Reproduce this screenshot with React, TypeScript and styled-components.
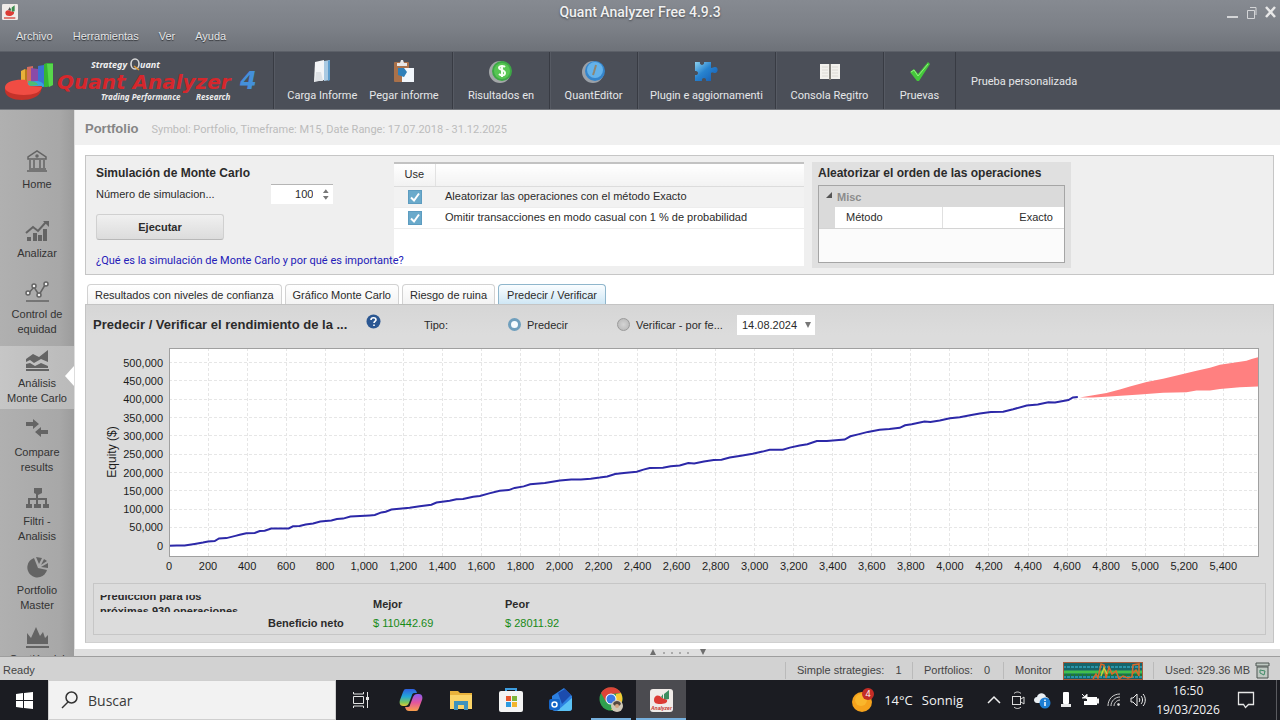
import React, { useLayoutEffect, useRef, useState } from "react";
import styled, { createGlobalStyle, css } from "styled-components";

const GlobalStyle = createGlobalStyle`
  * { box-sizing: border-box; }
  body {
    margin: 0;
    background: #fff;
    color: #2b2b2b;
    font: 11px/15px "Liberation Sans", Arial, sans-serif;
  }
  button, input, select { font: inherit; color: inherit; }
`;

const Window = styled.div`
  display: flex;
  flex-direction: column;
  height: 100vh;
  overflow: hidden;
`;

/* ---------- title and menu ---------- */

const TopBar = styled.header`
  flex: none;
  height: 51px;
  background: linear-gradient(#868a91, #7c8087 55%, #6e7279);
  color: #f0f0f0;
`;

const TitleRow = styled.div`
  display: grid;
  grid-template-columns: 1fr auto 1fr;
  align-items: center;
  height: 23px;
  padding: 0 2px 0 2px;
`;

const AppTitle = styled.h1`
  margin: 0;
  font: 500 14px/20px Roboto, sans-serif;
  color: #f0f0f0;
  text-shadow: 0 1px 2px #44474c;
`;

const WindowButtons = styled.div`
  display: flex;
  justify-content: flex-end;
  gap: 5px;
`;

const BareButton = styled.button`
  display: flex;
  align-items: center;
  justify-content: center;
  padding: 0;
  border: 0;
  background: none;
`;

const MenuRow = styled.nav`
  display: flex;
  gap: 20px;
  padding: 6px 16px;
`;

const MenuButton = styled(BareButton)`
  color: #e4e5e7;
  line-height: 15px;
  text-shadow: 0 1px 1px #2c2e32;
`;

/* ---------- tool bar ---------- */

const ToolBar = styled.div`
  flex: none;
  display: flex;
  height: 59px;
  background: #4b4f58;
  border-top: 1px solid #5c6068;
  border-bottom: 1px solid #74777d;
  color: #e6e7e9;
  font-family: Roboto, sans-serif;
`;

const Brand = styled.div`
  width: 273px;
  flex: none;
`;

const ToolGroup = styled.div<{ $width: number }>`
  flex: none;
  display: flex;
  justify-content: center;
  gap: 12px;
  width: ${(p) => p.$width}px;
  border-left: 1px solid #383b43;
  box-shadow: inset 1px 0 0 #565a63;
`;

const ToolButton = styled(BareButton)`
  flex-direction: column;
  justify-content: flex-start;
  gap: 4px;
  padding-top: 7px;
  white-space: nowrap;
  line-height: 15px;
`;

const CustomTest = styled(BareButton)`
  padding: 2px 15px 0;
  border-left: 1px solid #383b43;
`;

/* ---------- body ---------- */

const Body = styled.div`
  flex: 1;
  min-height: 0;
  display: flex;
`;

const Sidebar = styled.nav`
  flex: none;
  width: 74px;
  padding-top: 37px;
  overflow: hidden;
  background: linear-gradient(90deg, #b0b0b0, #a8a8a8 80%, #9c9c9c);
`;

const SideGroup = styled.div`
  margin-bottom: 14px;
`;

const SideItem = styled.button<{ $active?: boolean }>`
  position: relative;
  display: flex;
  flex-direction: column;
  align-items: center;
  gap: 3px;
  width: 100%;
  min-height: 55px;
  margin: 0 0 6px;
  padding: 2px 0 3px;
  border: 0;
  background: ${(p) => (p.$active ? "linear-gradient(90deg, #c6c6c6, #bababa)" : "none")};
  color: #333;
  line-height: 15px;
  text-align: center;
  white-space: pre-line;
  ${(p) =>
    p.$active &&
    css`
      &::after {
        content: "";
        position: absolute;
        right: 0;
        top: 20px;
        border: solid transparent;
        border-width: 10px 9px 10px 0;
        border-right-color: #fff;
      }
    `}
`;

const Main = styled.main`
  flex: 1;
  min-width: 0;
  display: flex;
  flex-direction: column;
  border-left: 1px solid #ddd;
`;

const PageHeader = styled.header`
  flex: none;
  display: flex;
  align-items: center;
  gap: 13px;
  height: 35px;
  padding: 3px 10px 0;
  background: #f0f0f0;
  color: #bcbcbc;
  font-family: Roboto, sans-serif;
`;

const PageTitle = styled.h2`
  margin: 0;
  font: bold 13px/18px "Liberation Sans", Arial, sans-serif;
  color: #858585;
`;

const Content = styled.div`
  flex: 1;
  min-height: 0;
  display: flex;
  flex-direction: column;
  padding: 10px 6px 6px 10px;
`;

const SetupPanel = styled.section`
  flex: none;
  display: flex;
  height: 120px;
  padding: 6px 10px;
  border: 1px solid #c6c6c6;
  background: #efefef;
`;

const SetupForm = styled.div`
  position: relative;
  flex: none;
  display: flex;
  flex-direction: column;
  align-items: flex-start;
  width: 298px;
  padding-top: 2px;
  white-space: nowrap;
`;

const SectionTitle = styled.h3`
  margin: 0;
  font-size: 12px;
  line-height: 18px;
`;

const CountRow = styled.div`
  display: flex;
  align-items: center;
  width: 237px;
  height: 24px;
  justify-content: space-between;
`;

const CountBox = styled.span`
  display: flex;
  align-items: center;
  width: 62px;
  height: 20px;
  padding-right: 3px;
  background: #fff;
  border-top: 1px solid #b5b5b5;
`;

const CountInput = styled.input`
  width: 100%;
  min-width: 0;
  padding: 0 9px 0 0;
  border: 0;
  background: none;
  text-align: right;
  appearance: textfield;
  &::-webkit-inner-spin-button { display: none; }
`;

const RunButton = styled.button`
  width: 128px;
  height: 26px;
  margin: 8px 0 13px;
  padding: 0;
  border: 1px solid #d0d0d0;
  border-bottom-color: #b8b8b8;
  border-radius: 3px;
  background: linear-gradient(#f0f0f0, #dcdcdc);
  font-weight: bold;
`;

const HelpLink = styled.a`
  color: #2420b8;
  font-family: Roboto, sans-serif;
  text-decoration: none;
  line-height: 15px;
`;

const OptionsBox = styled.div`
  flex: none;
  width: 410px;
  height: 104px;
  margin-right: 8px;
  border-top: 2px solid #c2c2c2;
  background: #fff;
`;

const OptionsTable = styled.table`
  width: 100%;
  border-collapse: collapse;
  th, td { padding: 0; height: 21px; text-align: left; font-weight: normal; }
  th { height: 22px; background: linear-gradient(#fff, #f2f2f2); border-bottom: 1px solid #dcdcdc; }
  th:first-child { width: 41px; text-align: center; border-right: 1px solid #e2e2e2; }
  td:first-child { text-align: center; }
  td:last-child { padding-left: 10px; }
  tbody tr:first-child { background: #f2f2f2; }
  tbody td { border-bottom: 1px solid #ededed; }
`;

const Tick = styled.input`
  appearance: none;
  display: block;
  width: 14px;
  height: 14px;
  margin: 0 auto;
  border: 1px solid #5d9cc0;
  background: #6aaacb
    url("data:image/svg+xml,%3Csvg xmlns='http://www.w3.org/2000/svg' viewBox='0 0 12 12'%3E%3Cpath d='M2 6.5l3 3L10 2.500' fill='none' stroke='white' stroke-width='2'/%3E%3C/svg%3E");
`;

const OrderBox = styled.div`
  flex: none;
  width: 259px;
  height: 106px;
  padding: 2px 6px 0;
  background: #e0e0e0;
`;

const OrderTitle = styled.h3`
  margin: 0;
  font-size: 12px;
  line-height: 18px;
  white-space: nowrap;
`;

const PropertyFrame = styled.div`
  height: 78px;
  margin-top: 3px;
  border: 1px solid #a5a5a5;
  background: #fbfbfb;
`;

const PropertyTable = styled.table`
  width: 100%;
  border-collapse: collapse;
  th { height: 21px; padding: 2px 6px 0; background: #dadada; color: #8c8c8c; text-align: left; }
  td { height: 21px; padding: 0 11px; border-bottom: 1px solid #d4d4d4; background: #fff; }
  td:first-child { width: 16px; padding: 0; background: #dadada; }
  td:nth-child(2) { width: 107px; border-right: 1px solid #e0e0e0; }
  td:last-child { text-align: right; }
`;

/* ---------- tabs and prediction ---------- */

const TabRow = styled.div`
  flex: none;
  display: flex;
  gap: 3px;
  margin-top: 9px;
  padding-left: 2px;
`;

const Tab = styled.button<{ $active?: boolean }>`
  height: 20px;
  padding: 2px ${(p) => (p.$active ? 8 : 7)}px 0;
  border: 1px solid ${(p) => (p.$active ? "#8fb6cc" : "#d2d2d2")};
  border-bottom: 0;
  border-radius: 4px 4px 0 0;
  background: ${(p) => (p.$active ? "linear-gradient(#fafdff, #cfe7f5)" : "linear-gradient(#fff, #f3f3f3)")};
  line-height: 15px;
  white-space: nowrap;
`;

const PredictPanel = styled.section`
  flex: 1;
  min-height: 0;
  display: flex;
  flex-direction: column;
  padding: 0 7px 7px;
  border: 1px solid #c4c4c4;
  border-bottom-color: #d0d0d0;
  background: linear-gradient(#d6d6d6, #dcdcdc 30px, #dcdcdc);
`;

const PredictHead = styled.div`
  flex: none;
  display: flex;
  align-items: center;
  height: 40px;
  white-space: nowrap;
`;

const PredictTitle = styled.h3`
  width: 272px;
  flex: none;
  margin: 0;
  font-size: 13px;
  line-height: 18px;
`;

const HelpButton = styled(BareButton)`
  width: 16px;
  height: 16px;
  margin: 0 43px 8px 0;
`;

const TypeLabel = styled.span`
  width: 84px;
`;

const RadioLabel = styled.label<{ $width: number }>`
  display: flex;
  align-items: center;
  gap: 6px;
  width: ${(p) => p.$width}px;
`;

const Radio = styled.input`
  appearance: none;
  width: 13px;
  height: 13px;
  margin: 0 0 2px;
  border: 1px solid #9a9a9a;
  border-radius: 50%;
  background: radial-gradient(#d4d4d4, #b4b4b4);
  &:checked {
    border: 3px solid #6f9fbd;
    background: #f6fcff;
  }
`;

const DateWrap = styled.span`
  display: flex;
  align-items: center;
  width: 78px;
  height: 20px;
  padding: 0 3px 0 5px;
  background: #fff;
`;

const DateSelect = styled.select`
  appearance: none;
  flex: 1;
  min-width: 0;
  padding: 0;
  border: 0;
  background: none;
`;

const ChartArea = styled.div`
  flex: 1;
  min-height: 120px;
  overflow: hidden;
`;

const ResultBox = styled.div`
  flex: none;
  display: flex;
  height: 52px;
  padding: 11px 6px 0;
  border: 1px solid #c6c6c6;
`;

const ResultNote = styled.div`
  display: flex;
  align-items: center;
  flex: none;
  width: 168px;
  height: 17px;
  overflow: hidden;
  font-weight: bold;
  white-space: pre;
`;

const ResultTable = styled.table`
  border-collapse: collapse;
  align-self: flex-start;
  th, td { width: 132px; height: 19px; padding: 0; text-align: left; }
  td { color: #178a17; }
  tr > :first-child { width: 105px; }
`;

const Splitter = styled.div`
  flex: none;
  display: flex;
  align-items: center;
  justify-content: center;
  height: 7px;
  background: #dedede;
`;

const StatusBar = styled.footer`
  flex: none;
  display: flex;
  align-items: center;
  height: 24px;
  padding: 4px 10px 0 3px;
  border-top: 1px solid #9e9e9e;
  background: #d2d2d2;
  color: #444;
`;

const Ready = styled.span`
  flex: 1;
`;

const StatusItem = styled.span<{ $width: number }>`
  display: flex;
  align-items: center;
  gap: 11px;
  width: ${(p) => p.$width}px;
  height: 17px;
  padding-left: 11px;
  border-left: 1px solid #bababa;
  white-space: nowrap;
`;

/* ---------- desktop task bar ---------- */

const TaskBar = styled.div`
  flex: none;
  display: flex;
  align-items: stretch;
  height: 40px;
  background: #1b1c22;
  color: #f2f2f2;
  font-family: "Open Sans", "Noto Sans", sans-serif;
`;

const StartButton = styled(BareButton)`
  width: 48px;
`;

const SearchBox = styled.label`
  display: flex;
  align-items: center;
  gap: 10px;
  width: 288px;
  padding: 0 12px;
  border: 1px solid #cfcfcf;
  background: #f2f2f2;
`;

const SearchInput = styled.input`
  flex: 1;
  min-width: 0;
  padding: 0;
  border: 0;
  background: none;
  color: #333;
  font-size: 14px;
  &::placeholder { color: #3a3a3a; opacity: 1; }
`;

const TaskButton = styled(BareButton)<{ $state?: "open" | "active" }>`
  width: 50px;
  ${(p) =>
    p.$state === "open" &&
    css`background: linear-gradient(#76b0de, #76b0de) center bottom / 40px 2px no-repeat;`}
  ${(p) =>
    p.$state === "active" &&
    css`background: #4b4b50; box-shadow: inset 0 -2px 0 #76b0de;`}
`;

const Tray = styled.div`
  display: flex;
  align-items: center;
  margin-left: auto;
`;

const Weather = styled(BareButton)`
  gap: 9px;
  margin-right: 19px;
  font-size: 13px;
  color: #f2f2f2;
`;

const TrayButton = styled(BareButton)`
  width: 24px;
  height: 40px;
`;

const Clock = styled.div`
  width: 76px;
  font-size: 12px;
  line-height: 19px;
  text-align: center;
`;

const NoticeButton = styled(BareButton)`
  width: 40px;
  height: 40px;
  margin-right: 10px;
`;

const DesktopEdge = styled.span`
  width: 4px;
  height: 40px;
  border-left: 1px solid #5a5b60;
`;

/* ---------- drawings ---------- */

const AppBadge = () => (
  <svg width="16" height="16" viewBox="0 0 24 24">
    <rect width="24" height="24" rx="2" fill="#f0ebe8" />
    <path d="M11 9l3-4v6zM15 5l4-3v9l-4 1z" fill="#3c8d50" />
    <path d="M9 9l3-5v6z" fill="#555" />
    <path d="M5 13c0-4 5-5 8-2l5 1c1 3-3 6-7 6s-6-2-6-5z" fill="#dc3b34" />
    <path d="M3 21h17" stroke="#d8483f" strokeWidth="2" />
  </svg>
);

const TaskAppIcon = () => (
  <svg width="25" height="25" viewBox="0 0 25 25">
    <rect x="1" y="1" width="23" height="23" rx="3" fill="#f0ebe8" />
    <path d="M12 9l2-3v5zM15 6l5-4v9l-5 1z" fill="#3c8d60" />
    <path d="M5 12c0-5 5-6 8-2l5 2c1 3-3 4-7 4s-6-1-6-4z" fill="#dc3b34" />
    <text x="2" y="22" fontFamily="Liberation Sans" fontSize="5" fontWeight="bold" fontStyle="italic" fill="#c3332c">Analyzer</text>
  </svg>
);

const BrandLogo = () => (
  <svg width="272" height="57" viewBox="0 52 272 57" role="img" aria-label="Quant Analyzer 4">
    <path d="M21 71l4-2v19h-4z" fill="#e8b23a" />
    <path d="M25 69l3 1v18h-3z" fill="#b97c1c" />
    <path d="M27 67l6-1v22h-6z" fill="#d46c5e" />
    <path d="M31 68l7 1v19h-7z" fill="#8a4aa8" />
    <path d="M38 66l6-1v22h-6z" fill="#3a72d2" />
    <path d="M44 64l3-1h6v22l-6 2h-3z" fill="#35b535" />
    <path d="M47 64h6v21l-4 2z" fill="#57d84b" />
    <path d="M27 84c7-5 16-3 17 2l-6 3z" fill="#39a3df" />
    <path d="M5 87v4c1 12 32 12 36 0l1-5z" fill="#c4322a" />
    <path d="M5 87c1-6 11-8 21-7l3 6 13 1c-1 5-8 8-18 8-12 0-20-4-19-8z" fill="#f04c43" />
    <path d="M28 81c5 0 9 1 10 4l-8 1z" fill="#4dbd74" />
    <g fontFamily="Noto Sans, sans-serif" fontStyle="italic" fontWeight="bold">
      <text x="91" y="68" fontSize="9" fill="#f0f0f0">Strategy</text>
      <text x="140" y="68" fontSize="9" fill="#f0f0f0">uant</text>
      <g fontFamily="DejaVu Sans, sans-serif">
        <text x="57" y="89" fontSize="20" fill="#d6272c">Quant Analyzer</text>
        <text x="240" y="89" fontSize="24" fill="#4490da">4</text>
      </g>
      <g fontSize="8" fill="#ececec">
        <text x="101" y="100">Trading Performance</text>
        <text x="196" y="100">Research</text>
      </g>
    </g>
    <ellipse cx="135" cy="64" rx="4" ry="5" fill="none" stroke="#d8d8d8" strokeWidth="1.6" />
    <path d="M134 66l5 4" stroke="#e09a35" strokeWidth="1.6" />
  </svg>
);

const ReportIcon = () => (
  <svg width="24" height="25" viewBox="0 0 24 25">
    <path d="M5 3l9-2v20l-10 2z" fill="#f3f5f7" />
    <path d="M14 2l6-1v20l-6 1z" fill="#a9c9e2" />
    <path d="M18 2l2-1v20l-2 1z" fill="#5e9dcc" />
    <path d="M6 13h5l2 9H5z" fill="#dde1e5" />
  </svg>
);

const PasteIcon = () => (
  <svg width="24" height="25" viewBox="0 0 24 25">
    <rect x="2" y="3" width="15" height="20" rx="1" fill="#a9714a" />
    <path d="M5 4h3l1-3h2l1 3h3v3H5z" fill="#e6e6e6" />
    <path d="M10 9h12v14H10z" fill="#f1f6fb" />
    <path d="M6 9h6l3 4-3 5-6-2z" fill="#2e7fb8" />
  </svg>
);

const MoneyIcon = () => (
  <svg width="24" height="25" viewBox="0 0 24 25">
    <circle cx="11" cy="13" r="11" fill="#a3a7a8" />
    <circle cx="13" cy="12" r="10" fill="#3da946" />
    <circle cx="13" cy="12" r="8" fill="#57c653" />
    <path d="M16 8c-2-2-6-1-6 1s6 2 6 5-4 3-6 1M13 6v12" fill="none" stroke="#f4fff2" strokeWidth="2" />
  </svg>
);

const EditorIcon = () => (
  <svg width="24" height="25" viewBox="0 0 24 25">
    <circle cx="11" cy="13" r="11" fill="#9ba1a8" />
    <circle cx="13" cy="12" r="10" fill="#3585cb" />
    <circle cx="13" cy="11" r="8" fill="#64b2ea" />
    <path d="M14 6l-2 7-1 3" stroke="#8f8670" strokeWidth="2" fill="none" />
  </svg>
);

const PuzzleIcon = () => (
  <svg width="24" height="25" viewBox="0 0 24 25">
    <defs>
      <linearGradient id="puzzle" x2="1" y2="1">
        <stop offset="0" stopColor="#8bd0ee" />
        <stop offset=".45" stopColor="#2783cf" />
        <stop offset="1" stopColor="#1459b0" />
      </linearGradient>
    </defs>
    <path d="M1 3h5c-1 4 5 4 4 0h7v6c2 0 2-1 4-1 4 0 3 6 0 6-2 0-2-1-4 0v8h-5c1-4-5-4-4 0H1v-6c4 1 4-5 0-4z" fill="url(#puzzle)" />
  </svg>
);

const BookIcon = () => (
  <svg width="24" height="25" viewBox="0 0 24 25">
    <path d="M2 5h20v15H2z" fill="#f2f1ed" />
    <path d="M12 5v16" stroke="#85837e" strokeWidth="2" />
    <path d="M4 8h6M4 11h6M4 14h6M4 17h6M14 8h6M14 11h6M14 14h6M14 17h6" stroke="#dcdad5" />
  </svg>
);

const CheckIcon = () => (
  <svg width="24" height="25" viewBox="0 0 24 25">
    <path d="M2 13l4-3 4 5L20 3l2 2-11 17H9z" fill="#45c83c" />
    <path d="M3 13l3-2 4 6L20 5" fill="none" stroke="#93f07e" />
  </svg>
);

const sideDrawings: Record<string, React.ReactNode> = {
  home: (
    <g fill="none" stroke="#646464" strokeWidth="1.5">
      <path d="M3 9V8l9-6 9 6v2H3zM4 20h17M2 22h20M5 11v8M9 11v8M15 11v8M19 11v8" />
      <circle cx="12" cy="7" r="1" />
    </g>
  ),
  analyze: (
    <g fill="#646464">
      <path d="M2 19h4v4H2zM8 15h4v8H8zM13 17h4v6h-4zM18 11h4v12h-4z" />
      <path d="M1 15l7-6 5 4 8-9" fill="none" stroke="#646464" strokeWidth="2" />
      <path d="M18 3h6v6z" />
    </g>
  ),
  control: (
    <g fill="#f2f2f2" stroke="#646464" strokeWidth="1.5">
      <path d="M3 15l6-7 5 8 6-10M1 22h23" fill="none" />
      <circle cx="3" cy="14" r="2" />
      <circle cx="9" cy="7" r="2" />
      <circle cx="14" cy="16" r="2" />
      <circle cx="21" cy="5" r="2" />
    </g>
  ),
  monte: (
    <g fill="#646464">
      <path d="M1 11l7-5 6 3 9-7v12l-7-3-7 4-4-3-4 2z" />
      <path d="M1 16l4-1 5 3 6-3 7 3v2H1zM1 21h23v2H1z" />
    </g>
  ),
  compare: <path d="M1 5h7V2l6 5-6 5V9H1zM23 13h-7v-3l-6 5 6 5v-3h7z" fill="#646464" />,
  filter: (
    <g fill="#646464">
      <path d="M9 2h8v5l-4 2-4-2zM1 18h6v4H1zM9 18h7v4H9zM18 18h6v4h-6z" />
      <path d="M4 18v-5h17v5M12 8v10" fill="none" stroke="#646464" strokeWidth="2" />
    </g>
  ),
  pie: (
    <g fill="#646464">
      <path d="M9 3a10 10 0 1 0 13 12l-9-2z" />
      <path d="M11 2l3 7 3-6zM19 4l-3 6 6-4zM16 12l7-4v5z" />
    </g>
  ),
  crown: <path d="M2 20V9l4 5 5-11 4 9 3-4 2 6 3-3v9zM1 22h23v2H1z" fill="#646464" />,
};

const SideIcon = ({ name }: { name: string }) => (
  <svg width="25" height="25" viewBox="0 0 25 25">{sideDrawings[name]}</svg>
);

/* ---------- equity chart ---------- */

// Pairs of [operation number, equity in thousands].
const equity: [number, number][] = [
  [0, 0], [40, 1], [80, 1], [131, 5], [174, 9], [200, 12], [234, 13], [256, 20], [294, 21], [340, 27], [362, 30],
  [396, 34], [439, 35], [465, 40], [490, 41], [524, 47], [613, 47], [635, 53], [669, 54], [700, 58], [738, 61],
  [775, 66], [832, 69], [860, 73], [892, 74], [929, 80], [1028, 83], [1054, 84], [1088, 91], [1110, 93],
  [1139, 99], [1233, 104], [1284, 108], [1344, 112], [1370, 118], [1438, 123], [1472, 127], [1506, 128],
  [1558, 134], [1592, 136], [1640, 143], [1694, 150], [1740, 152], [1770, 158], [1817, 162], [1850, 168],
  [1925, 171], [2002, 178], [2060, 181], [2110, 181], [2160, 183], [2206, 186], [2245, 189], [2285, 196],
  [2330, 199], [2396, 202], [2430, 208], [2462, 212], [2530, 213], [2570, 217], [2616, 219], [2660, 226],
  [2690, 225], [2740, 230], [2790, 234], [2830, 235], [2872, 241], [2930, 246], [2990, 251], [3040, 257],
  [3077, 262], [3144, 262], [3180, 268], [3230, 274], [3270, 277], [3318, 286], [3370, 286], [3461, 290],
  [3490, 299], [3530, 304], [3580, 311], [3640, 317], [3690, 319], [3743, 322], [3770, 329], [3804, 332],
  [3870, 339], [3900, 338], [3948, 342], [4000, 348], [4050, 351], [4110, 357], [4153, 361], [4210, 365],
  [4273, 366], [4324, 373], [4393, 383], [4450, 386], [4504, 392], [4538, 391], [4607, 398], [4630, 405], [4655, 406],
];
const best: [number, number][] = [
  [4665, 405], [4734, 411], [4802, 417], [4870, 427], [4922, 435], [5007, 447], [5092, 456], [5178, 467],
  [5263, 478], [5332, 486], [5383, 494], [5460, 500], [5519, 505], [5545, 510], [5578, 515],
];
const worst: [number, number][] = [
  [5578, 435], [5485, 433], [5383, 428], [5332, 424], [5263, 424], [5212, 419], [5092, 418], [4973, 413],
  [4836, 408], [4734, 405],
];

const X_MAX = 5578;
const Y_MIN = -28;
const Y_MAX = 540;

const EquityChart = () => {
  const ref = useRef<HTMLDivElement>(null);
  const [size, setSize] = useState({ w: 1173, h: 238 });
  useLayoutEffect(() => {
    const el = ref.current;
    if (!el) return;
    const measure = () => setSize({ w: el.clientWidth, h: el.clientHeight });
    measure();
    const observer = new ResizeObserver(measure);
    observer.observe(el);
    return () => observer.disconnect();
  }, []);

  const left = 76;
  const top = 3;
  const width = size.w - left - 8;
  const height = size.h - top - 27;
  const x = (v: number) => left + (v / X_MAX) * width;
  const y = (v: number) => top + ((Y_MAX - v) / (Y_MAX - Y_MIN)) * height;
  const line = (pts: [number, number][]) => pts.map(([a, b]) => `${x(a).toFixed(1)},${y(b).toFixed(1)}`).join(" ");
  const xTicks = Array.from({ length: 28 }, (_, i) => i * 200);
  const yTicks = Array.from({ length: 11 }, (_, i) => i * 50);

  return (
    <ChartArea ref={ref}>
      <svg width={size.w} height={size.h} display="block" fontFamily="Liberation Sans, Arial" fontSize="11" fill="#1c1c1c">
        <rect x={left} y={top} width={width} height={height} fill="#fff" />
        <g stroke="#e6e6e6" strokeDasharray="3 2" shapeRendering="crispEdges">
          {xTicks.slice(1).map((t) => <line key={t} x1={x(t)} x2={x(t)} y1={top} y2={top + height} />)}
          {yTicks.map((t) => <line key={t} x1={left} x2={left + width} y1={y(t)} y2={y(t)} />)}
        </g>
        <polygon points={line([...best, ...worst])} fill="#ff8080" />
        <polyline points={line(equity)} fill="none" stroke="#2c28a8" strokeWidth="2" />
        <rect x={left} y={top} width={width} height={height} fill="none" stroke="#a0a0a0" shapeRendering="crispEdges" />
        {xTicks.map((t) => (
          <text key={t} x={x(t)} y={top + height + 14} textAnchor="middle">{t.toLocaleString("en-US")}</text>
        ))}
        {yTicks.map((t) => (
          <text key={t} x={left - 6} y={y(t) + 4} textAnchor="end">{(t * 1000).toLocaleString("en-US")}</text>
        ))}
        <text transform={`translate(23 ${top + height / 2}) rotate(-90)`} textAnchor="middle" fontSize="12">Equity ($)</text>
      </svg>
    </ChartArea>
  );
};

/* ---------- page ---------- */

const toolGroups = [
  { width: 179, items: [["Carga Informe", <ReportIcon />], ["Pegar informe", <PasteIcon />]] },
  { width: 97, items: [["Risultados en", <MoneyIcon />]] },
  { width: 88, items: [["QuantEditor", <EditorIcon />]] },
  { width: 138, items: [["Plugin e aggiornamenti", <PuzzleIcon />]] },
  { width: 108, items: [["Consola Regitro", <BookIcon />]] },
  { width: 72, items: [["Pruevas", <CheckIcon />]] },
] as { width: number; items: [string, React.ReactNode][] }[];

const sideItems = [
  ["analyze", "Analizar"],
  ["control", "Control de\nequidad"],
  ["monte", "Análisis\nMonte Carlo"],
  ["compare", "Compare\nresults"],
  ["filter", "Filtri -\nAnalisis"],
  ["pie", "Portfolio\nMaster"],
  ["crown", "Gestión del"],
];

const tabs = ["Resultados con niveles de confianza", "Gráfico Monte Carlo", "Riesgo de ruina", "Predecir / Verificar"];

const MonitorGraph = () => (
  <svg width="80" height="18" viewBox="0 0 80 18">
    <rect width="80" height="18" fill="#17646a" />
    <path d="M0 5h80M0 15h80" stroke="#2a94a8" strokeWidth="2" strokeDasharray="3 1" />
    <path d="M0 10h80" stroke="#42c04c" strokeWidth="3" />
    <path d="M0 13h80" stroke="#1d7a34" strokeWidth="2" strokeDasharray="3 1" />
    <path d="M30 17l3-5 2 4 3-14 3 1 2 13 3-11 3 7 4-3 3 8 4-3 5 2 4-1 1-12 6-1v12l-3-6-4 4" fill="none" stroke="#d9692c" strokeWidth="1.5" />
    <path d="M38 14l3-8 3 6" fill="none" stroke="#c9d13b" strokeWidth="1.5" />
    <rect x=".5" y=".5" width="79" height="17" fill="none" stroke="#a85c3c" />
  </svg>
);

export default function App() {
  return (
    <Window>
      <GlobalStyle />
      <TopBar>
        <TitleRow>
          <AppBadge />
          <AppTitle>Quant Analyzer Free 4.9.3</AppTitle>
          <WindowButtons>
            <BareButton aria-label="Minimizar">
              <svg width="14" height="16" viewBox="0 0 14 16"><path d="M1 13h11" stroke="#d4d5d7" strokeWidth="2" /></svg>
            </BareButton>
            <BareButton aria-label="Restaurar">
              <svg width="12" height="16" viewBox="0 0 12 16" fill="none" stroke="#d4d5d7"><path d="M2.500 6.500h7v8h-7zM5 3.500h6V11" /></svg>
            </BareButton>
            <BareButton aria-label="Cerrar">
              <svg width="16" height="16" viewBox="0 0 16 16"><path d="M4 3l9 10M13 3L4 13" stroke="#e8e8e8" strokeWidth="2.500" /></svg>
            </BareButton>
          </WindowButtons>
        </TitleRow>
        <MenuRow>
          {["Archivo", "Herramientas", "Ver", "Ayuda"].map((m) => <MenuButton key={m}>{m}</MenuButton>)}
        </MenuRow>
      </TopBar>

      <ToolBar>
        <Brand><BrandLogo /></Brand>
        {toolGroups.map((g) => (
          <ToolGroup key={g.width} $width={g.width}>
            {g.items.map(([label, icon]) => (
              <ToolButton key={label}>{icon}{label}</ToolButton>
            ))}
          </ToolGroup>
        ))}
        <CustomTest>Prueba personalizada</CustomTest>
      </ToolBar>

      <Body>
        <Sidebar>
          <SideGroup>
            <SideItem><SideIcon name="home" />Home</SideItem>
          </SideGroup>
          {sideItems.map(([icon, label]) => (
            <SideItem key={icon} $active={icon === "monte"}><SideIcon name={icon} />{label}</SideItem>
          ))}
        </Sidebar>

        <Main>
          <PageHeader>
            <PageTitle>Portfolio</PageTitle>
            Symbol: Portfolio, Timeframe: M15, Date Range: 17.07.2018 - 31.12.2025
          </PageHeader>

          <Content>
            <SetupPanel>
              <SetupForm>
                <SectionTitle>Simulación de Monte Carlo</SectionTitle>
                <CountRow>
                  <label htmlFor="runs">Número de simulacion...</label>
                  <CountBox>
                    <CountInput id="runs" type="number" defaultValue={100} />
                    <svg width="9" height="12" viewBox="0 0 8 12"><path d="M4 0l3 4H1zM1 7h6l-3 4z" fill="#777" /></svg>
                  </CountBox>
                </CountRow>
                <RunButton>Ejecutar</RunButton>
                <HelpLink href="#monte-carlo">¿Qué es la simulación de Monte Carlo y por qué es importante?</HelpLink>
              </SetupForm>

              <OptionsBox>
                <OptionsTable>
                  <thead><tr><th>Use</th><th /></tr></thead>
                  <tbody>
                    <tr>
                      <td><Tick id="exact" type="checkbox" defaultChecked /></td>
                      <td><label htmlFor="exact">Aleatorizar las operaciones con el método Exacto</label></td>
                    </tr>
                    <tr>
                      <td><Tick id="skip" type="checkbox" defaultChecked /></td>
                      <td><label htmlFor="skip">Omitir transacciones en modo casual con 1 % de probabilidad</label></td>
                    </tr>
                  </tbody>
                </OptionsTable>
              </OptionsBox>

              <OrderBox>
                <OrderTitle>Aleatorizar el orden de las operaciones</OrderTitle>
                <PropertyFrame>
                  <PropertyTable>
                    <tbody>
                      <tr>
                        <th colSpan={3}>
                          <svg width="12" height="10" viewBox="0 0 12 10"><path d="M7 1v6H1z" fill="#555" /></svg>Misc
                        </th>
                      </tr>
                      <tr><td /><td>Método</td><td>Exacto</td></tr>
                    </tbody>
                  </PropertyTable>
                </PropertyFrame>
              </OrderBox>
            </SetupPanel>

            <TabRow role="tablist">
              {tabs.map((t, i) => <Tab key={t} role="tab" aria-selected={i === 3} $active={i === 3}>{t}</Tab>)}
            </TabRow>

            <PredictPanel>
              <PredictHead>
                <PredictTitle>Predecir / Verificar el rendimiento de la ...</PredictTitle>
                <HelpButton aria-label="Ayuda">
                  <svg width="15" height="15" viewBox="0 0 15 15">
                    <circle cx="7.500" cy="7.500" r="7" fill="#2b5792" />
                    <path d="M5 6c0-3 5-3 5 0 0 1-2 1.500-2 3M8 10.500v1.500" fill="none" stroke="#fff" strokeWidth="1.600" />
                  </svg>
                </HelpButton>
                <TypeLabel>Tipo:</TypeLabel>
                <RadioLabel $width={109}><Radio type="radio" name="kind" defaultChecked />Predecir</RadioLabel>
                <RadioLabel $width={120}><Radio type="radio" name="kind" />Verificar - por fe...</RadioLabel>
                <DateWrap>
                  <DateSelect aria-label="Fecha"><option>14.08.2024</option></DateSelect>
                  <svg width="8" height="8" viewBox="0 0 8 8"><path d="M1 1h6L4 7z" fill="#777" /></svg>
                </DateWrap>
              </PredictHead>

              <EquityChart />

              <ResultBox>
                <ResultNote>{"Predicción para los\npróximas 930 operaciones"}</ResultNote>
                <ResultTable>
                  <tbody>
                    <tr><th /><th>Mejor</th><th>Peor</th></tr>
                    <tr><th>Beneficio neto</th><td>$ 110442.69</td><td>$ 28011.92</td></tr>
                  </tbody>
                </ResultTable>
              </ResultBox>
            </PredictPanel>
          </Content>

          <Splitter>
            <svg width="56" height="7" viewBox="0 0 56 7">
              <path d="M3 0l3 6H0zM50 0h6l-3 6z" fill="#6e6e6e" />
              <path d="M13 4h26" stroke="#aaa" strokeWidth="2" strokeDasharray="2 6" />
            </svg>
          </Splitter>
        </Main>
      </Body>

      <StatusBar>
        <Ready>Ready</Ready>
        <StatusItem $width={127}>Simple strategies:<span>1</span></StatusItem>
        <StatusItem $width={91}>Portfolios:<span>0</span></StatusItem>
        <StatusItem $width={150}>Monitor<MonitorGraph /></StatusItem>
        <StatusItem $width={102}>Used: 329.36 MB</StatusItem>
        <BareButton aria-label="Liberar memoria">
          <svg width="15" height="17" viewBox="0 0 15 17">
            <path d="M1 1h13v3H1zM2 5h11v11H2z" fill="#bfc8c2" stroke="#4c5450" />
            <path d="M5 8l5 1-1 4-4-2z" fill="none" stroke="#3f8a66" />
          </svg>
        </BareButton>
      </StatusBar>

      <TaskBar>
        <StartButton aria-label="Inicio">
          <svg width="17" height="17" viewBox="0 0 17 17"><path d="M0 2l7-1v7H0zM8 1l9-1v8H8zM0 9h7v7l-7-1zM8 9h9v8l-9-1z" fill="#fff" /></svg>
        </StartButton>
        <SearchBox>
          <svg width="17" height="18" viewBox="0 0 17 18" fill="none" stroke="#333" strokeWidth="1.500"><circle cx="10.500" cy="6.500" r="5.500" /><path d="M7 11l-6 6" /></svg>
          <SearchInput placeholder="Buscar" aria-label="Buscar" />
        </SearchBox>
        <TaskButton aria-label="Vista de tareas">
          <svg width="18" height="18" viewBox="0 0 18 18" fill="none" stroke="#e4e4e4"><path d="M1.500 1v2h10V1M1.500 17v-2h10v2M1.500 5.500h10v7h-10zM15.500 1v16" /><path d="M15.500 6v3" strokeWidth="3" /></svg>
        </TaskButton>
        <TaskButton aria-label="Copilot">
          <svg width="24" height="24" viewBox="0 0 24 24">
            <defs>
              <linearGradient id="copilotA" x2="0" y2="1">
                <stop offset="0" stopColor="#2f5fe0" />
                <stop offset=".45" stopColor="#22a7d8" />
                <stop offset=".8" stopColor="#7fc65a" />
                <stop offset="1" stopColor="#e8c63a" />
              </linearGradient>
              <linearGradient id="copilotB" x2="0" y2="1">
                <stop offset="0" stopColor="#8a5cf0" />
                <stop offset=".5" stopColor="#e3559f" />
                <stop offset="1" stopColor="#f9a04a" />
              </linearGradient>
            </defs>
            <path d="M7 1h7c2 0 3 1 4 4h-3c-1 0-2 1-2 2l-3 8c-1 2-2 3-4 3H4c-3 0-4-3-3-6l3-8c1-2 1-3 3-3z" fill="url(#copilotA)" />
            <path d="M17 23h-7c-2 0-3-1-4-4h3c1 0 2-1 2-2l3-8c1-2 2-3 4-3h2c3 0 4 3 3 6l-3 8c-1 2-1 3-3 3z" fill="url(#copilotB)" />
          </svg>
        </TaskButton>
        <TaskButton aria-label="Explorador">
          <svg width="24" height="24" viewBox="0 0 24 24"><path d="M1 3h8l2 2h12v14H1z" fill="#e9b23c" /><path d="M1 7h22v14H1z" fill="#fbd468" /><path d="M5 22v-9h14v9h-4v-5H9v5z" fill="#3e93bd" /></svg>
        </TaskButton>
        <TaskButton aria-label="Store">
          <svg width="26" height="26" viewBox="0 0 26 26"><path d="M8 6V2h10v4" fill="none" stroke="#3d9de0" strokeWidth="2" /><rect x="1" y="4" width="24" height="21" rx="2" fill="#f4f4f4" /><path d="M8 9h5v5H8z" fill="#e8572f" /><path d="M14 9h5v5h-5z" fill="#7db53a" /><path d="M8 15h5v5H8z" fill="#2d9be0" /><path d="M14 15h5v5h-5z" fill="#f2b52c" /></svg>
        </TaskButton>
        <TaskButton aria-label="Outlook">
          <svg width="26" height="26" viewBox="0 0 26 26"><path d="M4 9L16 1l8 8v12c0 2-1 3-3 3H7c-2 0-3-1-3-3z" fill="#2c7fe0" /><path d="M10 6l7-4 6 6-9 9z" fill="#1c4cae" /><path d="M9 24l15-13v10c0 2-1 3-3 3z" fill="#5bc2f5" /><rect x="1" y="12" width="11" height="11" rx="2" fill="#1565c8" /><circle cx="6.500" cy="17.500" r="2.500" fill="none" stroke="#fff" strokeWidth="1.500" /></svg>
        </TaskButton>
        <TaskButton aria-label="Chrome" $state="open">
          <svg width="26" height="26" viewBox="0 0 26 26"><circle cx="13" cy="12" r="11.500" fill="#2fa04e" /><path d="M3 6a11.500 11.500 0 0 1 20 0l-10 1-5 8z" fill="#dd4438" /><path d="M23 6c4 8-1 17-10 17l5-8V7z" fill="#f7c934" /><circle cx="13" cy="12" r="5.500" fill="#fff" /><circle cx="13" cy="12" r="4.500" fill="#3c78e4" /><circle cx="19" cy="19" r="6" fill="#cfc8b8" /><path d="M15 17c1-4 7-4 8 0l-2 2h-4z" fill="#54483f" /><circle cx="19" cy="19" r="2" fill="#d3a582" /></svg>
        </TaskButton>
        <TaskButton aria-label="Quant Analyzer" $state="active"><TaskAppIcon /></TaskButton>

        <Tray>
          <Weather>
            <svg width="24" height="26" viewBox="0 0 24 26">
              <circle cx="11" cy="15" r="10" fill="#f5a21c" />
              <circle cx="10" cy="13" r="6" fill="#f9b62c" />
              <circle cx="17" cy="7" r="6" fill="#c42d26" />
              <text x="17" y="10" fontSize="9" textAnchor="middle" fill="#fff">4</text>
            </svg>
            <span>14°C</span>
            <span>Sonnig</span>
          </Weather>
          <TrayButton aria-label="Mostrar iconos ocultos">
            <svg width="14" height="10" viewBox="0 0 14 10"><path d="M1 8l6-6 6 6" fill="none" stroke="#eee" strokeWidth="1.500" /></svg>
          </TrayButton>
          <TrayButton aria-label="Reunirse">
            <svg width="14" height="18" viewBox="0 0 14 18" fill="none" stroke="#ddd"><rect x="1.500" y="5.500" width="8" height="8" /><path d="M10 8l3-2v7l-3-2M3 2.500c2-2 5-2 7 0M3 16c2 2 5 2 7 0" /></svg>
          </TrayButton>
          <TrayButton aria-label="OneDrive">
            <svg width="18" height="18" viewBox="0 0 18 18"><path d="M4 12c-4 0-4-6 0-6 1-5 8-5 9 0 3 0 4 4 2 6z" fill="#e9eef3" /><circle cx="12" cy="12" r="5.500" fill="#1d7ed4" /><path d="M12 11v4M12 8.500v1.500" stroke="#fff" strokeWidth="1.500" /></svg>
          </TrayButton>
          <TrayButton aria-label="Micrófono">
            <svg width="12" height="18" viewBox="0 0 12 18"><rect x="3" y="1" width="6" height="12" rx="1" fill="#fff" /><path d="M1 13h10v3H1z" fill="#e8e8e8" /></svg>
          </TrayButton>
          <TrayButton aria-label="Batería">
            <svg width="18" height="14" viewBox="0 0 18 14"><path d="M6 4h10v8H3V8h3z" fill="#fff" /><path d="M16 6h2v4h-2zM1 1l5 5M1 5h5V1" fill="#fff" stroke="#eee" /></svg>
          </TrayButton>
          <TrayButton aria-label="Wifi">
            <svg width="14" height="14" viewBox="0 0 14 14" fill="none" stroke="#d0d0d0"><path d="M1 13C1 6 6 1 13 1M4 13c0-5 4-9 9-9M7 13c0-3 3-6 6-6" /><circle cx="11.500" cy="11.500" r="1" fill="#ddd" /></svg>
          </TrayButton>
          <TrayButton aria-label="Volumen">
            <svg width="16" height="14" viewBox="0 0 16 14" fill="none" stroke="#eee"><path d="M1 5h2l4-4v12L3 9H1zM9 5c1 1 1 3 0 4M11 3c2 2 2 6 0 8M13 1c3 3 3 9 0 12" /></svg>
          </TrayButton>
          <Clock>16:50<br />19/03/2026</Clock>
          <NoticeButton aria-label="Notificaciones">
            <svg width="18" height="18" viewBox="0 0 18 18"><path d="M1.500 1.500h15v12h-5l-3 3-2-3h-5z" fill="none" stroke="#e6e6e6" strokeWidth="1.300" /></svg>
          </NoticeButton>
          <DesktopEdge />
        </Tray>
      </TaskBar>
    </Window>
  );
}
